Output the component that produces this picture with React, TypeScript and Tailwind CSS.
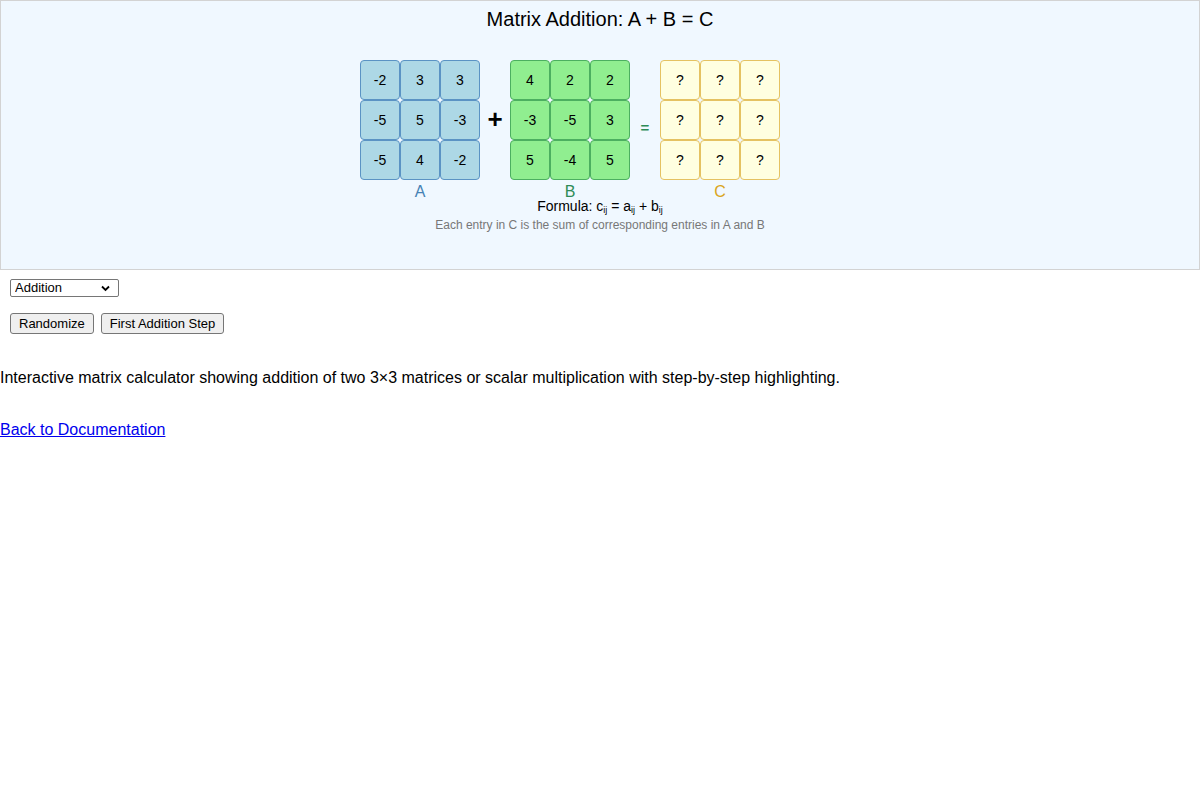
import React, { useState } from 'react';

type Matrix = (number | null)[][];

const A: Matrix = [
  [-2, 3, 3],
  [-5, 5, -3],
  [-5, 4, -2],
];

const B: Matrix = [
  [4, 2, 2],
  [-3, -5, 3],
  [5, -4, 5],
];

const C: Matrix = [
  [null, null, null],
  [null, null, null],
  [null, null, null],
];

interface MatrixGridProps {
  data: Matrix;
  cellClass: string;
  label: string;
  labelClass: string;
}

const MatrixGrid: React.FC<MatrixGridProps> = ({ data, cellClass, label, labelClass }) => (
  <div className="flex flex-col items-center">
    <div className="grid grid-cols-3 w-[120px]">
      {data.flat().map((v, i) => (
        <div
          key={i}
          className={`h-[40px] w-[40px] flex items-center justify-center rounded-[4px] border text-[14px] text-black ${cellClass}`}
        >
          {v === null ? '?' : v}
        </div>
      ))}
    </div>
    <div className={`mt-[3px] text-[16px] leading-[18px] ${labelClass}`}>{label}</div>
  </div>
);

export default function App() {
  const [mode, setMode] = useState('addition');

  return (
    <div className="min-h-screen bg-white text-black font-['Liberation_Sans',Arial,sans-serif]">
      <div className="h-[270px] w-[1200px] border border-[#d3d3d3] bg-[#f0f8ff] flex flex-col">
        <h1 className="mt-[6px] text-center text-[20px] leading-[24px] font-normal">
          Matrix Addition: A + B = C
        </h1>

        <div className="mt-[29px] ml-[359px] flex items-start">
          <MatrixGrid
            data={A}
            label="A"
            cellClass="bg-[#add8e6] border-[#5b93c4]"
            labelClass="text-[#4682b4]"
          />
          <div className="h-[120px] w-[30px] flex items-center justify-center text-[26px] font-bold leading-none pb-[2px]">
            +
          </div>
          <MatrixGrid
            data={B}
            label="B"
            cellClass="bg-[#90ee90] border-[#4caf60]"
            labelClass="text-[#2e8b57]"
          />
          <div className="h-[120px] w-[30px] flex items-center justify-center pt-[15px] text-[15px] font-bold leading-none text-[#2e8b57]">
            =
          </div>
          <MatrixGrid
            data={C}
            label="C"
            cellClass="bg-[#ffffe0] border-[#e5c261]"
            labelClass="text-[#daa520]"
          />
        </div>

        <div className="-mt-[3px] text-center text-[14px] leading-[16px]">
          Formula: c<sub className="text-[9px]">ij</sub> = a<sub className="text-[9px]">ij</sub> + b
          <sub className="text-[9px]">ij</sub>
        </div>
        <div className="mt-[4px] text-center text-[12px] leading-[14px] text-[#777777]">
          Each entry in C is the sum of corresponding entries in A and B
        </div>
      </div>

      <div className="ml-[10px] mt-[9px] relative w-[109px] h-[18px]">
        <select
          value={mode}
          onChange={e => setMode(e.target.value)}
          className="block appearance-none w-[109px] h-[18px] border border-[#767676] rounded-[2px] bg-white pl-[4px] text-[13px] leading-[16px] text-black"
        >
          <option value="addition">Addition</option>
          <option value="scalar">Scalar Multiplication</option>
        </select>
        <svg
          className="absolute right-[9px] top-[6px] pointer-events-none"
          width="9"
          height="7"
          viewBox="0 0 9 7"
        >
          <path d="M1 1.5 L4.5 5 L8 1.5" fill="none" stroke="#000" strokeWidth="1.8" />
        </svg>
      </div>

      <div className="ml-[10px] mt-[16px] flex gap-[7px]">
        <button className="h-[21px] px-[8px] border border-[#767676] rounded-[3px] bg-[#efefef] text-[13px] leading-[15px] text-black">
          Randomize
        </button>
        <button className="h-[21px] px-[8px] border border-[#767676] rounded-[3px] bg-[#efefef] text-[13px] leading-[15px] text-black">
          First Addition Step
        </button>
      </div>

      <p className="mt-[35px] text-[16px] leading-[18px]">
        Interactive matrix calculator showing addition of two 3×3 matrices or scalar multiplication with step-by-step highlighting.
      </p>

      <p className="mt-[34px] text-[16px] leading-[18px]">
        <a href="#" className="text-[#0000ee] underline">
          Back to Documentation
        </a>
      </p>
    </div>
  );
}
